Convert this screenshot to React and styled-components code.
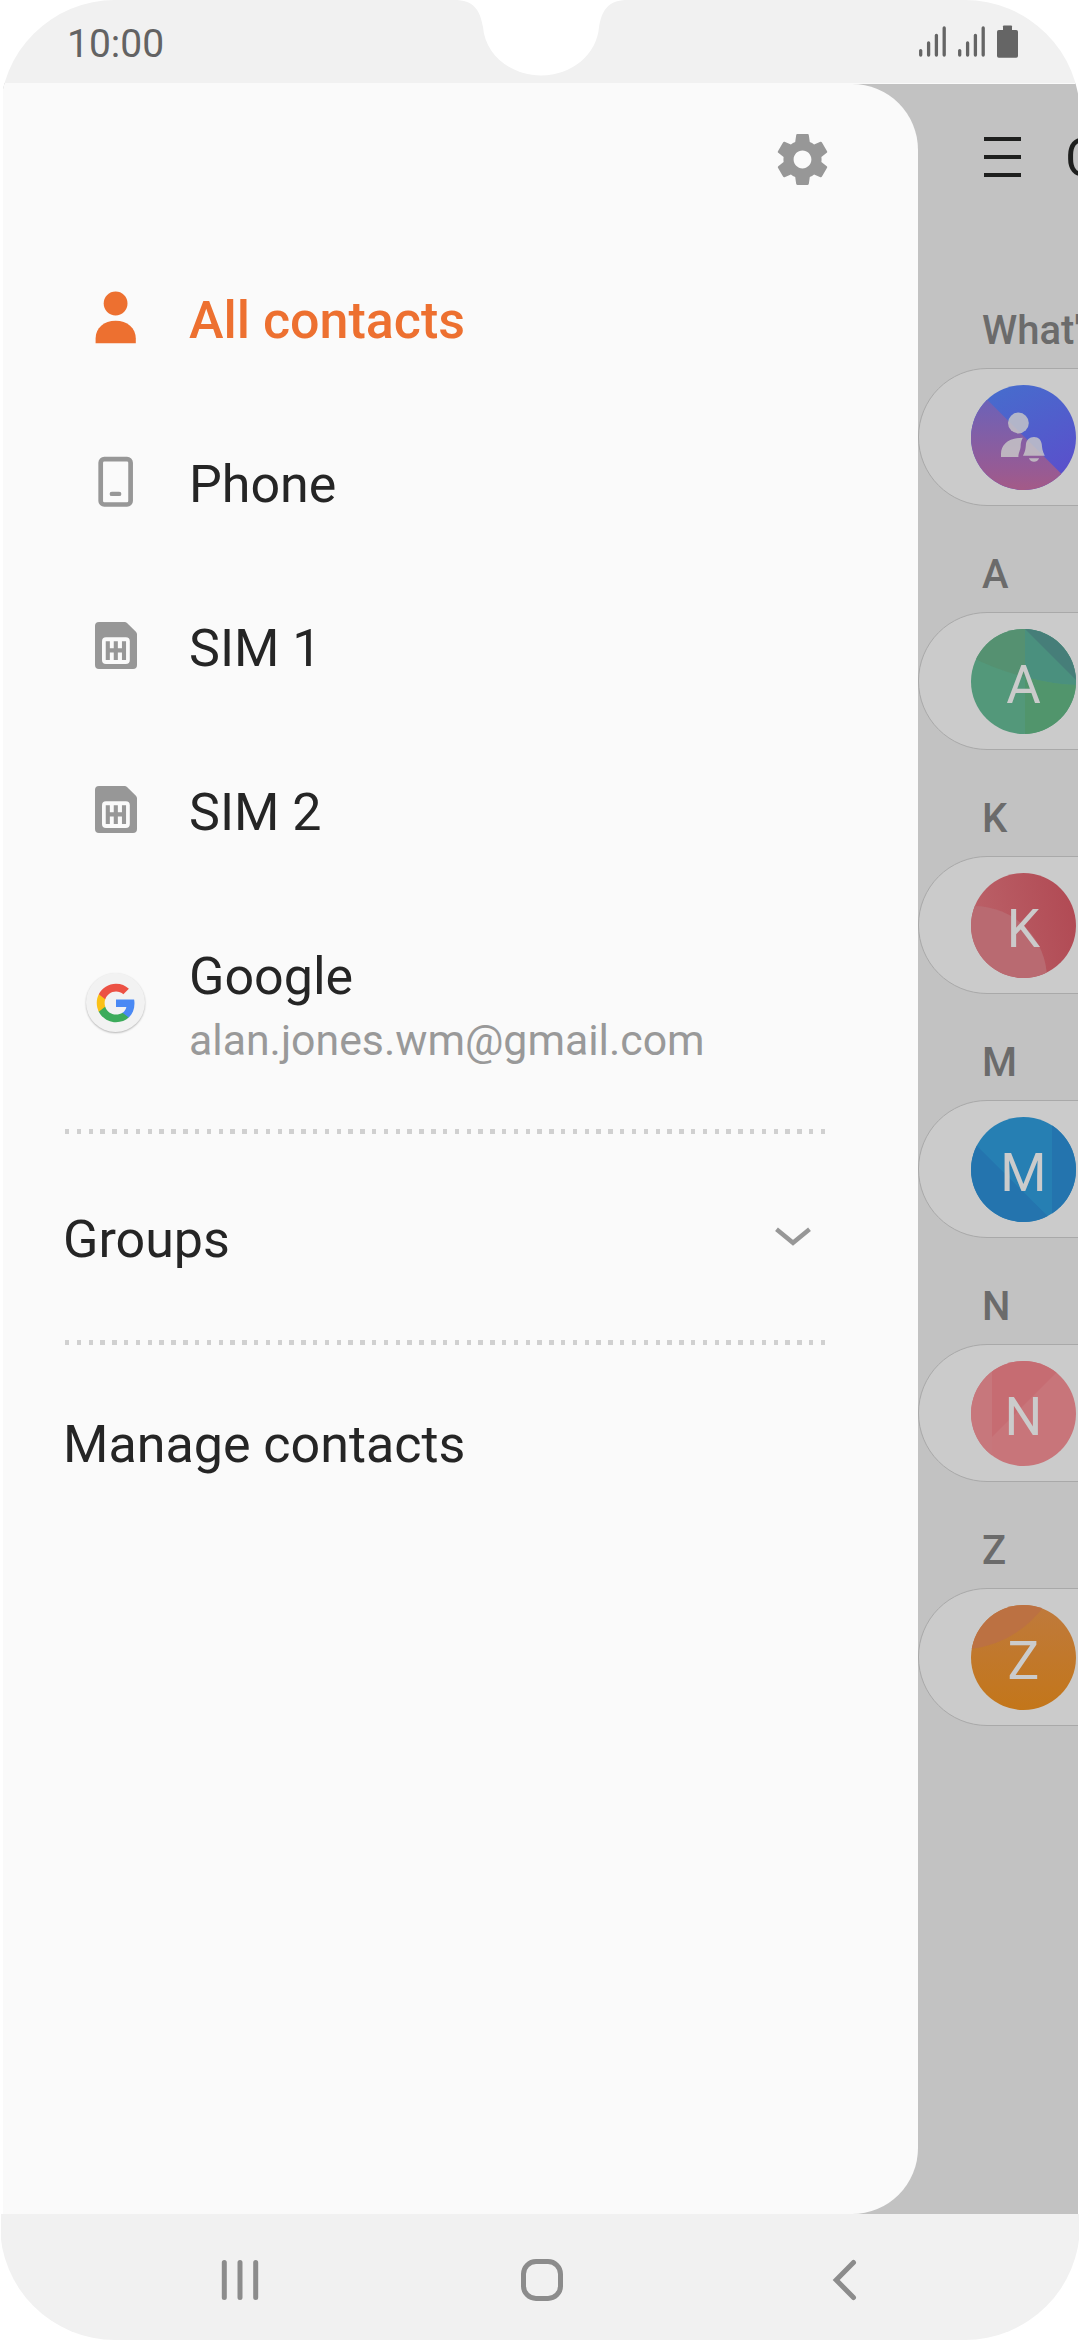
import React from "react";
import styled, { createGlobalStyle } from "styled-components";

const GlobalStyle = createGlobalStyle`
  * { box-sizing: border-box; }
  body { margin: 0; background: #fff; font-family: Roboto, "Noto Sans", sans-serif; }
  svg { display: block; flex: none; }
`;

const Phone = styled.div`
  width: 1080px;
  height: 2340px;
  display: flex;
  flex-direction: column;
  overflow: hidden;
  background: #fff;
  border-radius: 115px;
`;

const StatusBar = styled.header`
  position: relative;
  height: 83px;
  margin: 0 1px;
  padding: 0 61px 0 66px;
  display: flex;
  justify-content: space-between;
  background: #f1f1f1;
  color: #636363;
`;

const Clock = styled.span`
  font-size: 39px;
  line-height: 88px;
`;

const Notch = styled.svg`
  position: absolute;
  left: 453px;
  top: 0;
`;

const StatusIcons = styled.div`
  display: flex;
  gap: 12px;
  padding-top: 25px;
`;

const Body = styled.main`
  flex: 1;
  display: flex;
  margin: 0 2px 0 3px;
  background: #c2c2c2;
  border-top: 1px solid #fafafa;
  overflow: hidden;
`;

const Drawer = styled.nav`
  flex: 0 0 915px;
  background: #fafafa;
  border-radius: 0 66px 66px 0;
`;

const DrawerHeader = styled.div`
  height: 154px;
  padding: 45px 85px 0 0;
  display: flex;
  justify-content: flex-end;
`;

const Account = styled.div`
  height: 164px;
  padding-left: 83px;
  display: flex;
  align-items: center;
  gap: 43px;
  color: ${(p) => (p.$active ? "#ed7030" : "#252525")};
  font-weight: ${(p) => (p.$active ? 500 : 400)};
`;

const GoogleAccount = styled(Account)`
  height: 235px;
  padding-top: 55px;
  align-items: flex-start;
`;

const GoogleBadge = styled.div`
  width: 59px;
  height: 59px;
  margin: 24px 1px 0 0;
  border-radius: 50%;
  background: #f2f2f2;
  box-shadow: 0 1px 2px rgba(0, 0, 0, 0.28);
  display: grid;
  place-items: center;
`;

const Label = styled.span`
  display: block;
  padding-top: 2px;
  font-size: 52px;
  line-height: 52px;
  white-space: nowrap;
`;

const Email = styled.span`
  display: block;
  margin-top: 12px;
  font-size: 42.8px;
  line-height: 50px;
  color: #999;
`;

const Divider = styled.div`
  width: 761px;
  height: 5px;
  margin-left: 61.7px;
  background: repeating-linear-gradient(90deg, #d0d0d0 0 4.4px, transparent 4.4px 11.81px);
`;

const MenuRow = styled.div`
  height: ${(p) => p.$height}px;
  padding: 4px 107px 0 60px;
  display: flex;
  align-items: center;
  justify-content: space-between;
  color: #252525;
`;

const ChevronIcon = styled.svg`
  margin-bottom: 4px;
`;

const Page = styled.section`
  flex: 1;
  min-width: 0;
  overflow: hidden;
`;

const PageHeader = styled.div`
  height: 202px;
  padding-left: 66px;
  display: flex;
  gap: 44px;
`;

const HamburgerLines = styled.div`
  flex: none;
  width: 37px;
  height: 40px;
  margin-top: 53px;
  display: flex;
  flex-direction: column;
  justify-content: space-between;
`;

const Line = styled.i`
  height: 3.8px;
  background: #1e1f1e;
`;

const PageTitle = styled.h1`
  margin: 44px 0 0;
  font-size: 53px;
  line-height: 60px;
  font-weight: 400;
  color: #1e1f1e;
`;

const Section = styled.div`
  height: 244px;
`;

const SectionTitle = styled.h2`
  margin: 0;
  height: 82px;
  padding: 20px 0 0 64px;
  font-size: 40px;
  line-height: 50px;
  font-weight: 500;
  white-space: nowrap;
  color: #6b6b6b;
`;

const Card = styled.div`
  width: 400px;
  height: 138px;
  padding: 16px 0 0 52px;
  border: 1px solid #a9a9a9;
  border-radius: 69px;
  background: #cbcbcb;
`;

const Avatar = styled.div`
  width: 105px;
  height: 105px;
  border-radius: 50%;
  overflow: hidden;
  display: grid;
  place-items: center;
  & > * { grid-area: 1 / 1; }
`;

const Initial = styled.span`
  z-index: 1;
  font-size: 53px;
  line-height: 60px;
  padding-top: 7px;
  color: #cbcbcb;
`;

const NavBar = styled.footer`
  height: 126px;
  margin: 0 1px;
  padding: 43px 216px 0 220px;
  display: flex;
  justify-content: space-between;
  background: #f1f1f1;
`;

const Signal = () => (
  <svg width="27" height="32" viewBox="0 0 27 32" stroke="#656565" strokeWidth="3.3" strokeLinecap="round">
    <path d="M1.7 25.6V30M9.6 18V30M17.4 10.3V30M25.2 3V30" />
  </svg>
);

const Battery = () => (
  <svg width="21" height="33" viewBox="0 0 21 33" fill="#656565">
    <rect x="6" y="0.5" width="9" height="8" rx="0.8" />
    <rect y="5" width="21" height="27.8" rx="1.8" />
  </svg>
);

const Gear = () => (
  <svg width="61" height="61" viewBox="0 0 24 24" fill="#979797">
    <path d="M19.43 12.98c.04-.32.07-.64.07-.98s-.03-.66-.07-.98l2.11-1.65c.19-.15.24-.42.12-.64l-2-3.46c-.12-.22-.39-.3-.61-.22l-2.49 1c-.52-.4-1.08-.73-1.69-.98l-.38-2.65C14.46 2.18 14.25 2 14 2h-4c-.25 0-.46.18-.49.42l-.38 2.65c-.61.25-1.17.59-1.69.98l-2.49-1c-.23-.09-.49 0-.61.22l-2 3.46c-.13.22-.07.49.12.64l2.11 1.65c-.04.32-.07.65-.07.98s.03.66.07.98l-2.11 1.65c-.19.15-.24.42-.12.64l2 3.46c.12.22.39.3.61.22l2.49-1c.52.4 1.08.73 1.69.98l.38 2.65c.03.24.24.42.49.42h4c.25 0 .46-.18.49-.42l.38-2.65c.61-.25 1.17-.59 1.69-.98l2.49 1c.23.09.49 0 .61-.22l2-3.46c.12-.22.07-.49-.12-.64l-2.11-1.65zM12 15.5c-1.93 0-3.5-1.57-3.5-3.5s1.57-3.5 3.5-3.5 3.5 1.57 3.5 3.5-1.57 3.5-3.5 3.5z" />
  </svg>
);

const PersonIcon = () => (
  <svg width="60" height="60" viewBox="0 0 60 60" fill="#ed7030">
    <circle cx="29.6" cy="13.5" r="11.9" />
    <path d="M9.6 53.2V48.5C9.6 38 18 30.7 29.6 30.7S49.8 38 49.8 48.5V53.2Z" />
  </svg>
);

const PhoneIcon = () => (
  <svg width="60" height="60" viewBox="0 0 60 60" fill="none" stroke="#979797">
    <rect x="14.7" y="5.2" width="29.9" height="45.3" rx="3.6" strokeWidth="4.7" />
    <path d="M25.8 39.9H33.2" strokeWidth="4.4" strokeLinecap="round" />
  </svg>
);

const SimIcon = () => (
  <svg width="60" height="60" viewBox="0 0 60 60">
    <path fill="#979797" d="M13 4H38.6Q40 4 41 5L49.9 13.8Q51 14.9 51 16.3V47Q51 51 47 51H13Q9 51 9 47V8Q9 4 13 4Z" />
    <rect x="16" y="19.3" width="27.8" height="26.7" rx="4" fill="#fafafa" />
    <path d="M21.8 23.2V42M29.8 23.2V42M38 23.2V42M21.8 32.4H38" stroke="#979797" strokeWidth="4.1" />
  </svg>
);

const GoogleIcon = () => (
  <svg width="42" height="42" viewBox="0 0 24 24">
    <path fill="#4a89f4" d="M22.56 12.25c0-.78-.07-1.53-.2-2.25H12v4.26h5.92c-.26 1.37-1.04 2.53-2.21 3.31v2.77h3.57c2.08-1.92 3.28-4.74 3.28-8.09z" />
    <path fill="#3cab5b" d="M12 23c2.97 0 5.46-.98 7.28-2.66l-3.57-2.77c-.98.66-2.23 1.06-3.71 1.06-2.86 0-5.29-1.93-6.16-4.53H2.18v2.84C3.99 20.53 7.7 23 12 23z" />
    <path fill="#fbc117" d="M5.84 14.09c-.22-.66-.35-1.36-.35-2.09s.13-1.43.35-2.09V7.07H2.18C1.43 8.55 1 10.22 1 12s.43 3.45 1.18 4.93l2.85-2.22.81-.62z" />
    <path fill="#ec5144" d="M12 5.38c1.62 0 3.06.56 4.21 1.64l3.15-3.15C17.45 2.09 14.97 1 12 1 7.7 1 3.99 3.47 2.18 7.07l3.66 2.84c.87-2.6 3.3-4.53 6.16-4.53z" />
  </svg>
);

const Chevron = () => (
  <ChevronIcon width="36" height="20" viewBox="0 0 36 20" fill="none" stroke="#979797" strokeWidth="4.4">
    <path d="M1.5 2.2L18 15.8L34.5 2.2" />
  </ChevronIcon>
);

const art = {
  bell: (
    <>
      <defs>
        <linearGradient id="bellTop" x1="0.3" y1="0" x2="0.8" y2="1">
          <stop offset="0" stopColor="#476ccd" />
          <stop offset="1" stopColor="#5c4dcb" />
        </linearGradient>
        <linearGradient id="bellBottom" x1="0" y1="0.15" x2="0" y2="1">
          <stop offset="0" stopColor="#6c62b8" />
          <stop offset="0.75" stopColor="#955b96" />
          <stop offset="1" stopColor="#a45a87" />
        </linearGradient>
      </defs>
      <rect width="105" height="105" fill="url(#bellTop)" />
      <path d="M0 -1.5L106.5 105H0Z" fill="url(#bellBottom)" />
      <g fill="#c8c8c8" fillOpacity="0.82">
        <circle cx="47.4" cy="38" r="10.4" />
        <path d="M30 72V69C30 59 38 52.7 51.8 52.7C50 56 49.8 58 49.6 62C49.2 66 47.5 67 47.4 72Z" />
        <path d="M52 70.8C54.5 66 54.6 63 54.9 59.5C55.3 55 58.5 52 63 52S70.4 55 70.8 59.5C71.1 63 71.4 66 73.8 70.8Z" />
        <path d="M57.8 73.3H68.2C67 75.8 65.3 76.8 63 76.8S59 75.8 57.8 73.3Z" />
      </g>
    </>
  ),
  A: (
    <>
      <rect width="105" height="105" fill="#53987a" />
      <path d="M0 28Q26 41 54 48V0H0Z" fill="#559171" />
      <path d="M54 0V48Q80 55 105 56V0Z" fill="#4a907e" />
      <path d="M54 0L105 51V0Z" fill="#467e79" />
      <path d="M54 48Q80 55 105 56V105H54Z" fill="#51956c" />
    </>
  ),
  K: (
    <>
      <defs>
        <linearGradient id="redShade" x1="0" y1="0.5" x2="1" y2="0.3">
          <stop offset="0" stopColor="#bb6168" />
          <stop offset="1" stopColor="#b14a54" />
        </linearGradient>
      </defs>
      <rect width="105" height="105" fill="url(#redShade)" />
      <circle cx="3" cy="106" r="73" fill="#b96a71" />
    </>
  ),
  M: (
    <>
      <rect width="105" height="105" fill="#267fb3" />
      <path d="M0 23L81 103.500V0H105V105H0Z" fill="#2474ae" />
    </>
  ),
  N: (
    <>
      <rect width="105" height="105" fill="#c8757a" />
      <path d="M21 0H97L21 76Z" fill="#c66c72" />
      <rect width="21" height="105" fill="#c7777c" />
    </>
  ),
  Z: (
    <>
      <defs>
        <linearGradient id="amberShade" x1="0" y1="0" x2="0" y2="1">
          <stop offset="0" stopColor="#bf7a3c" />
          <stop offset="1" stopColor="#c3761a" />
        </linearGradient>
      </defs>
      <rect width="105" height="105" fill="url(#amberShade)" />
      <path d="M0 44Q46 38 74 0H0Z" fill="#bc7142" />
    </>
  ),
};

const sections = [
  { title: "What's new", kind: "bell" },
  { title: "A", kind: "A" },
  { title: "K", kind: "K" },
  { title: "M", kind: "M" },
  { title: "N", kind: "N" },
  { title: "Z", kind: "Z" },
];

const accounts = [
  { label: "All contacts", Icon: PersonIcon, active: true },
  { label: "Phone", Icon: PhoneIcon },
  { label: "SIM 1", Icon: SimIcon },
  { label: "SIM 2", Icon: SimIcon },
];

export default function App() {
  return (
    <Phone>
      <GlobalStyle />
      <StatusBar>
        <Clock>10:00</Clock>
        <Notch width="175" height="76" viewBox="0 0 175 76" fill="#fff">
          <path d="M0 0C20 0 26 10 29 27C31 54 56 75.500 87 75.500S143 54 145 27C148 10 154 0 174 0Z" />
        </Notch>
        <StatusIcons>
          <Signal />
          <Signal />
          <Battery />
        </StatusIcons>
      </StatusBar>
      <Body>
        <Drawer>
          <DrawerHeader>
            <Gear />
          </DrawerHeader>
          {accounts.map(({ label, Icon, active }) => (
            <Account key={label} $active={active}>
              <Icon />
              <Label>{label}</Label>
            </Account>
          ))}
          <GoogleAccount>
            <GoogleBadge>
              <GoogleIcon />
            </GoogleBadge>
            <div>
              <Label>Google</Label>
              <Email>alan.jones.wm@gmail.com</Email>
            </div>
          </GoogleAccount>
          <Divider />
          <MenuRow $height={206}>
            <Label>Groups</Label>
            <Chevron />
          </MenuRow>
          <Divider />
          <MenuRow $height={194}>
            <Label>Manage contacts</Label>
          </MenuRow>
        </Drawer>
        <Page>
          <PageHeader>
            <HamburgerLines>
              <Line />
              <Line />
              <Line />
            </HamburgerLines>
            <PageTitle>Contacts</PageTitle>
          </PageHeader>
          {sections.map(({ title, kind }) => (
            <Section key={kind}>
              <SectionTitle>{title}</SectionTitle>
              <Card>
                <Avatar>
                  <svg width="105" height="105" viewBox="0 0 105 105">{art[kind]}</svg>
                  {kind !== "bell" && <Initial>{kind}</Initial>}
                </Avatar>
              </Card>
            </Section>
          ))}
        </Page>
      </Body>
      <NavBar>
        <svg width="38" height="44" viewBox="0 0 38 44" stroke="#8c8c8c" strokeWidth="5" strokeLinecap="round">
          <path d="M3.3 5.5V40.5M19 5.5V40.5M34.7 5.5V40.5" />
        </svg>
        <svg width="44" height="44" viewBox="0 0 44 44" fill="none" stroke="#8c8c8c" strokeWidth="5">
          <rect x="3.5" y="4.5" width="37" height="37" rx="12.5" />
        </svg>
        <svg width="38" height="44" viewBox="-8 0 38 44" fill="none" stroke="#8c8c8c" strokeWidth="5" strokeLinecap="round">
          <path d="M20.5 5.5L3.2 23L20.5 40.5" />
        </svg>
      </NavBar>
    </Phone>
  );
}
